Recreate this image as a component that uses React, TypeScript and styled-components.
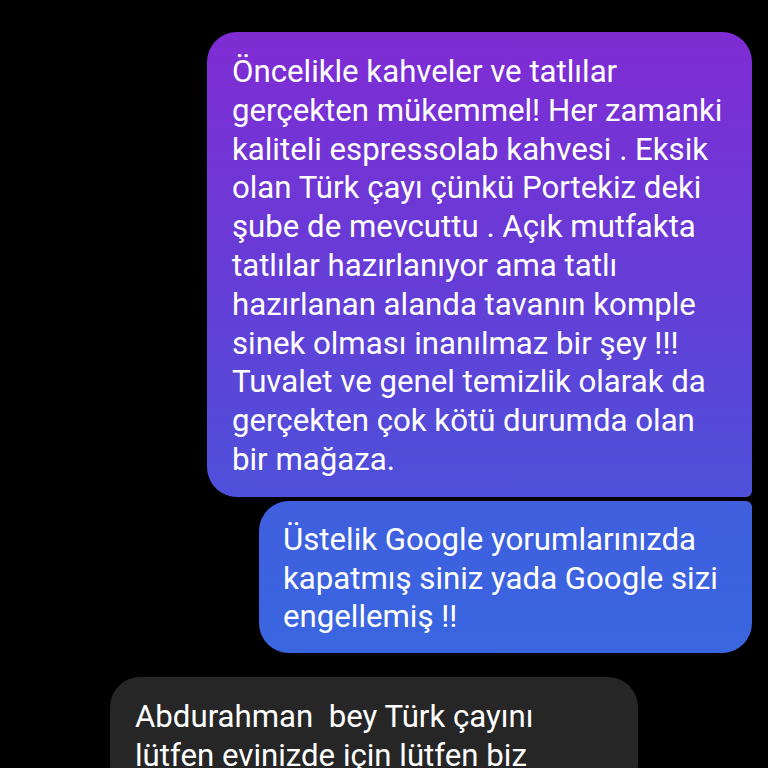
import styled, { createGlobalStyle, css } from 'styled-components';

const GlobalStyle = createGlobalStyle`
  html, body {
    margin: 0;
    padding: 0;
    background: #000;
  }
  body {
    font-family: Roboto, "Noto Sans", "Liberation Sans", sans-serif;
    -webkit-font-smoothing: antialiased;
  }
`;

type Side = 'out' | 'in';
type Corner = 'top' | 'bottom' | 'none';

interface Message {
  id: number;
  side: Side;
  tail: Corner;
  width: number;
  tone: string;
  text: string;
}

const messages: Message[] = [
  {
    id: 1,
    side: 'out',
    tail: 'bottom',
    width: 545,
    tone: 'linear-gradient(180deg, #7f2cd3 0%, #6a3ad6 45%, #4d50da 100%)',
    text: [
      'Öncelikle kahveler ve tatlılar',
      'gerçekten mükemmel! Her zamanki',
      'kaliteli espressolab kahvesi . Eksik',
      'olan Türk çayı çünkü Portekiz deki',
      'şube de mevcuttu . Açık mutfakta',
      'tatlılar hazırlanıyor ama tatlı',
      'hazırlanan alanda tavanın komple',
      'sinek olması inanılmaz bir şey !!!',
      'Tuvalet ve genel temizlik olarak da',
      'gerçekten çok kötü durumda olan',
      'bir mağaza.',
    ].join('\n'),
  },
  {
    id: 2,
    side: 'out',
    tail: 'top',
    width: 493,
    tone: 'linear-gradient(180deg, #3f5fde 0%, #3a66e0 100%)',
    text: ['Üstelik Google yorumlarınızda', 'kapatmış siniz yada Google sizi', 'engellemiş !!'].join('\n'),
  },
  {
    id: 3,
    side: 'in',
    tail: 'none',
    width: 528,
    tone: '#262626',
    text: ['Abdurahman  bey Türk çayını', 'lütfen evinizde için lütfen biz'].join('\n'),
  },
];

const App: React.FC = () => {
  return (
    <>
      <GlobalStyle />
      <Thread>
        {messages.map((message) => (
          <Row key={message.id} $side={message.side} $gap={message.side === 'in' ? 24 : 4}>
            <Bubble $tail={message.tail} $width={message.width} $tone={message.tone}>
              {message.text}
            </Bubble>
          </Row>
        ))}
      </Thread>
    </>
  );
};

const Thread = styled.div`
  display: flex;
  flex-direction: column;
  padding: 32px 16px 0 110px;
  height: 768px;
  box-sizing: border-box;
  overflow: hidden;
`;

const Row = styled.div<{ $side: Side; $gap: number }>`
  display: flex;
  justify-content: ${(p) => (p.$side === 'out' ? 'flex-end' : 'flex-start')};
  margin-top: ${(p) => p.$gap}px;

  &:first-child {
    margin-top: 0;
  }
`;

const Bubble = styled.div<{ $tail: Corner; $width: number; $tone: string }>`
  box-sizing: border-box;
  width: ${(p) => p.$width}px;
  padding: 21px 20px 17px 25px;
  background: ${(p) => p.$tone};
  color: #fff;
  font-size: 31.2px;
  line-height: 38.8px;
  white-space: pre-wrap;
  border-radius: 30px;
  flex-shrink: 0;

  ${(p) =>
    p.$tail === 'bottom' &&
    css`
      border-bottom-right-radius: 6px;
    `}

  ${(p) =>
    p.$tail === 'top' &&
    css`
      border-top-right-radius: 6px;
      padding: 20px 20px 16px 24px;
    `}
`;

export default App;
